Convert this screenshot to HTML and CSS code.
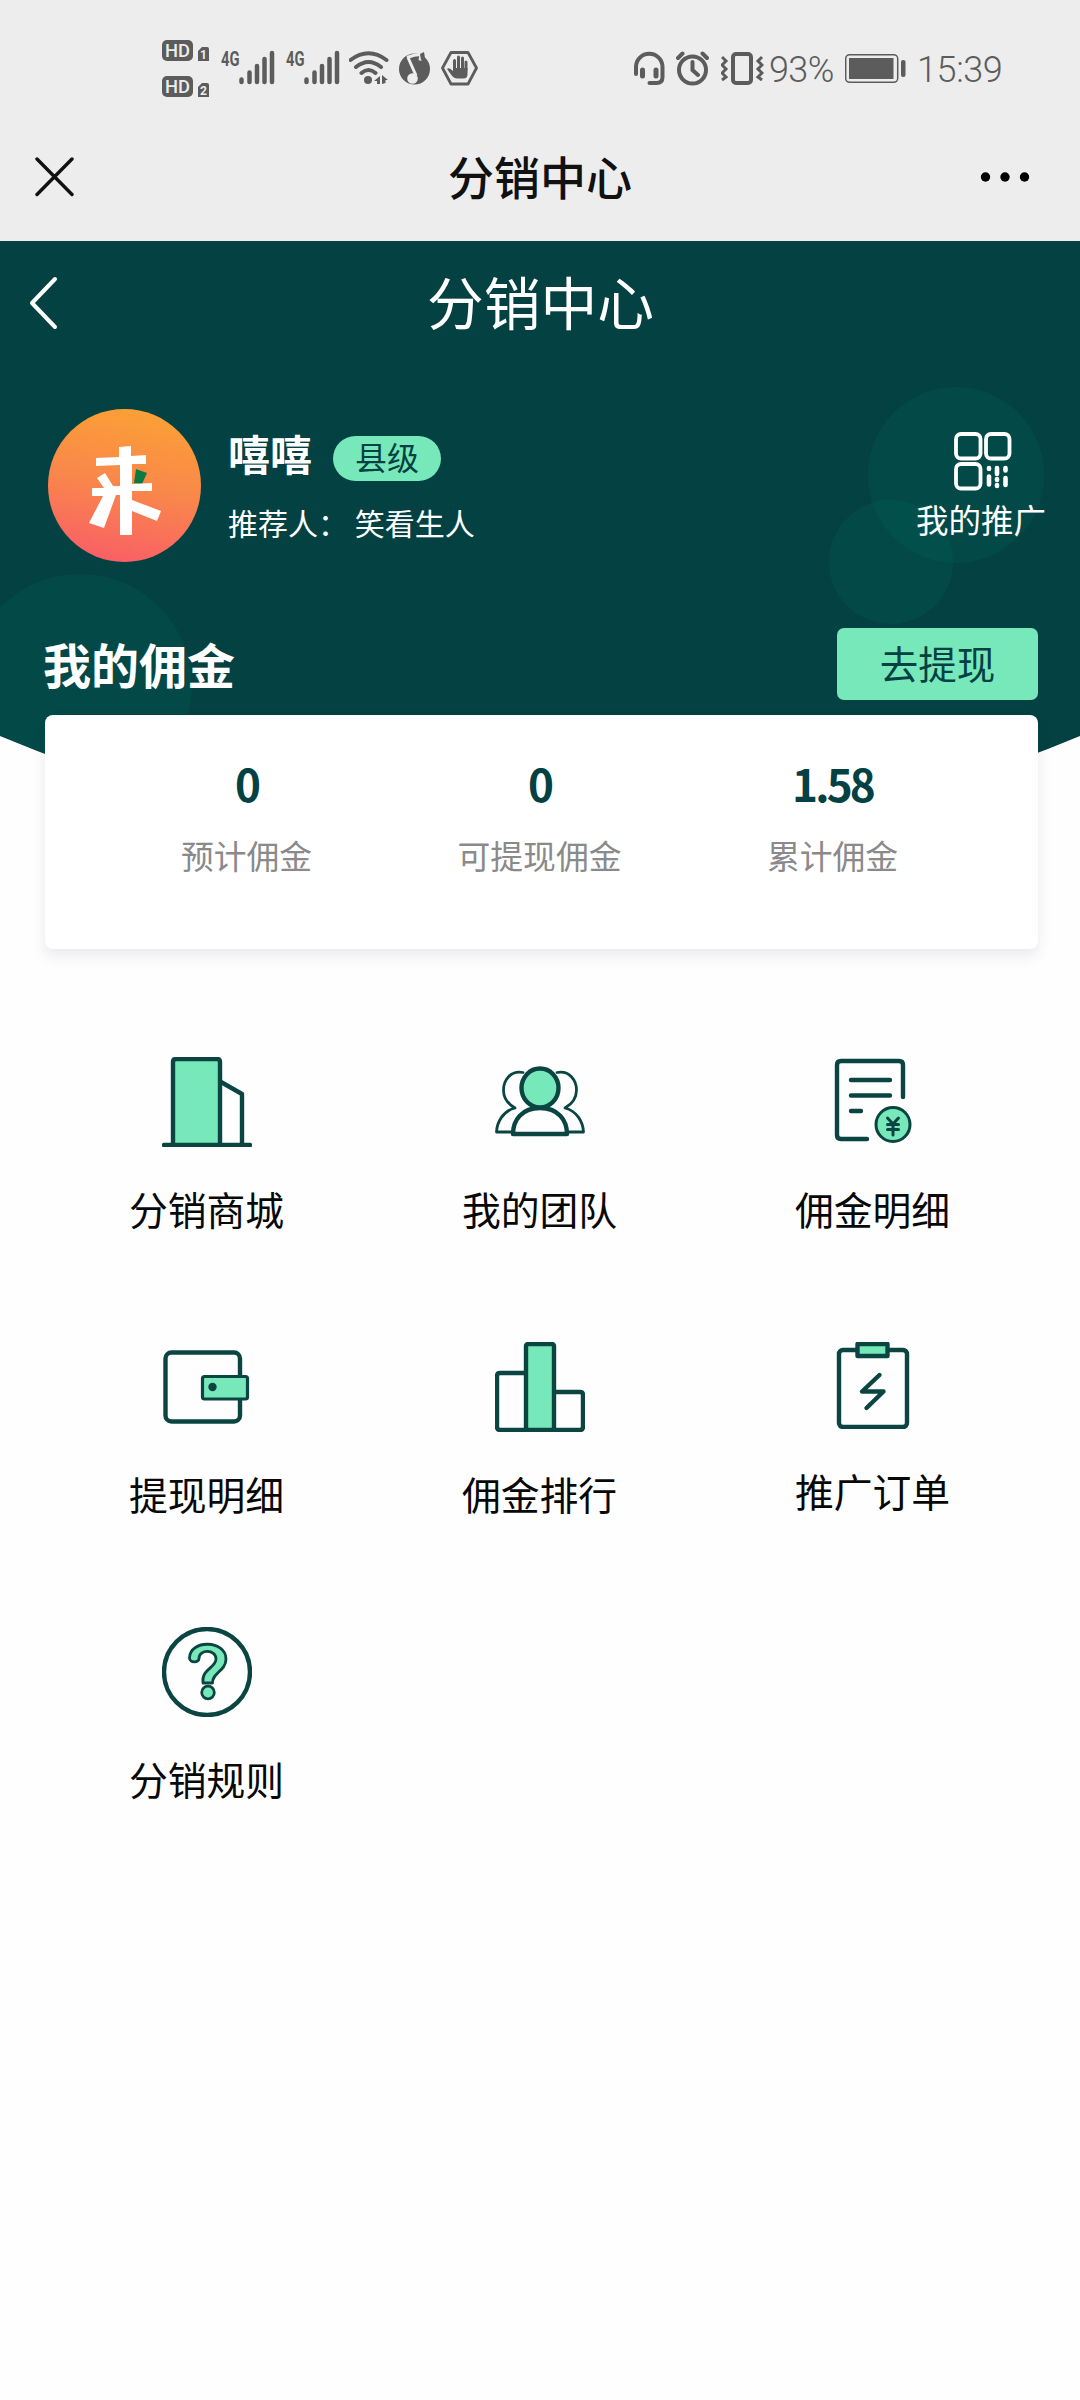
FILE: index.html
```html
<!DOCTYPE html>
<html lang="zh-CN">
<head>
<meta charset="utf-8">
<title>分销中心</title>
<link rel="stylesheet" href="styles.css">
</head>
<body>
<header class="top">
  <div class="status">
    <div class="status-left">
      <svg class="sim" width="48" height="66" viewBox="162 36 48 66">
        <rect x="162" y="40" width="31" height="21" rx="5"/><text class="hd" x="177.500" y="57" textLength="25" lengthAdjust="spacingAndGlyphs">HD</text>
        <path d="M198 51l4-4h5q2 0 2 2v12h-11z"/><text class="simno" x="203.500" y="59">1</text>
        <rect x="162" y="76" width="31" height="21" rx="5"/><text class="hd" x="177.500" y="93" textLength="25" lengthAdjust="spacingAndGlyphs">HD</text>
        <path d="M198 87l4-4h5q2 0 2 2v12h-11z"/><text class="simno" x="203.500" y="95">2</text>
      </svg>
      <svg class="signal" width="54" height="66" viewBox="221 36 54 66">
        <text class="g4" x="221" y="65.500" textLength="18.500" lengthAdjust="spacingAndGlyphs">4G</text>
        <path class="bars" d="M241.500 79.500v2.500M249.500 72.500v9.500M257 66v16M264.500 59v23M272 53v29"/>
      </svg>
      <svg class="signal" width="54" height="66" viewBox="221 36 54 66">
        <text class="g4" x="221" y="65.500" textLength="18.500" lengthAdjust="spacingAndGlyphs">4G</text>
        <path class="bars" d="M241.500 79.500v2.500M249.500 72.500v9.500M257 66v16M264.500 59v23M272 53v29"/>
      </svg>
      <svg class="wifi" width="40" height="66" viewBox="349 36 40 66">
        <path class="line" d="M350.500 60q18-13.500 36 0M356 67q12.500-10 25 0M361.500 73q7-6 14 0"/>
        <circle cx="368" cy="80" r="4"/><path d="M374 81l6-5v8h-3v-3zM382 75l6 5h-2.500v3l-3.500 1z"/>
      </svg>
      <svg class="music" width="32" height="66" viewBox="399 36 32 66">
        <circle cx="414.500" cy="69" r="15.500"/>
        <path class="note" d="M408 57.500l8 18M407 57.500q7-3 14-3l-1 6"/>
        <circle class="cut" cx="412.500" cy="78.500" r="5.300"/>
        <path d="M420 54l4-2 1 6-4 2z"/>
      </svg>
      <svg class="hand" width="38" height="66" viewBox="441 36 38 66">
        <path class="hex" d="M451 52.500h17l8.500 15.500-8.500 16h-17l-8.500-16z"/>
        <path class="finger" d="M454.500 70v-9.500M458.500 68v-11M462.500 68v-10M466 70v-8"/>
        <path d="M453 68h14.500v6q0 4.500-4 4.500h-6q-4 0-6.500-4l-4-5.500q2-2 6 2z"/>
      </svg>
    </div>
    <div class="status-right">
      <svg width="32" height="66" viewBox="633 36 32 66">
        <path class="line" d="M636 74v-7a13.200 13.200 0 0 1 26.500 0v10q0 6-6 6h-7"/>
        <path class="pad" d="M642.500 70v6M656 70v6"/>
      </svg>
      <svg class="alarm" width="34" height="66" viewBox="676 36 34 66">
        <circle class="line" cx="692.500" cy="70" r="13.500"/><path class="line" d="M692.500 62v8l5.500 5M678 58l4.500-4.500M707 58l-4.500-4.500"/>
      </svg>
      <svg class="vibrate" width="43" height="66" viewBox="721 36 43 66">
        <rect class="line" x="733" y="54" width="18" height="29" rx="3"/>
        <path class="zig" d="M722 57l4 4-4 4 4 4-4 4 4 4-4 3M762 57l-4 4 4 4-4 4 4 4-4 4 4 3"/>
      </svg>
      <span class="pct">93%</span>
      <svg class="battery" width="61" height="66" viewBox="845 36 61 66">
        <rect class="shell" x="845.700" y="54.700" width="52" height="27.600" rx="4"/>
        <rect x="849" y="58" width="44.500" height="21"/><rect x="901" y="60" width="4.500" height="17" rx="2"/>
      </svg>
      <span class="time">15:39</span>
    </div>
  </div>
  <nav class="navbar">
    <svg width="40" height="40" viewBox="0 0 40 40"><path class="close" d="M3 2l35 35.500M38 2L3 37.500"/></svg>
    <span class="nav-title">分销中心</span>
    <svg width="50" height="12" viewBox="0 0 50 12"><circle cx="5.500" cy="6" r="4.700"/><circle cx="25" cy="6" r="4.700"/><circle cx="44.500" cy="6" r="4.700"/></svg>
  </nav>
</header>

<section class="hero">
  <svg class="hero-bg" width="1080" height="540" viewBox="0 0 1080 540">
    <defs><clipPath id="curve"><path d="M0 0H1080V495Q540 720 0 495z"/></clipPath></defs>
    <g clip-path="url(#curve)">
      <path fill="#044142" d="M0 0H1080V540H0z"/>
      <circle cx="80" cy="445" r="112" fill="#00806a" opacity=".12"/>
      <circle cx="956" cy="234" r="88" fill="#008070" opacity=".14"/>
      <circle cx="891" cy="321" r="62" fill="#008070" opacity=".13"/>
    </g>
  </svg>
  <div class="page-head">
    <svg class="back" width="30" height="54" viewBox="0 0 30 54"><path d="M27 3L4 27l23 24"/></svg>
    <h1>分销中心</h1>
  </div>
  <div class="profile">
    <svg class="avatar" width="153" height="153" viewBox="0 0 153 153">
      <defs><linearGradient id="sunset" x1=".6" y1="0" x2=".4" y2="1"><stop offset="0" stop-color="#fba035"/><stop offset=".5" stop-color="#f9874b"/><stop offset="1" stop-color="#f95f66"/></linearGradient></defs>
      <circle cx="76.500" cy="76.500" r="76.500" fill="url(#sunset)"/>
      <path fill="#0b7a42" d="M88 60l11 4-5 11-8-1z"/>
      <path fill="#fff" d="M48 49l23-1V38l12-1v10l15-1v9H84v20l20-1v8H84v9l29 11-4 10-25-10v24H72V86h-4l-12 33-15-5 14-27H44v-8h12l-7-10 8-5 8 13h7V56l-24 1z"/>
    </svg>
    <div class="who">
      <div class="who-line"><strong>嘻嘻</strong><span class="level">县级</span></div>
      <p>推荐人： 笑看生人</p>
    </div>
    <a class="promo">
      <svg width="58" height="59" viewBox="0 0 58 59">
        <g class="qr"><rect x="2" y="2" width="24.500" height="24.500" rx="5"/><rect x="32" y="2" width="23.500" height="24.500" rx="5"/><rect x="2" y="32" width="24.500" height="24.500" rx="5"/></g>
        <path class="dots" d="M35 36v1M35 44.500v8M43 36v6M43 47v1M43 53v1M51.500 36v2.500M51.500 46v7"/>
      </svg>
      <span>我的推广</span>
    </a>
  </div>
  <div class="money-head"><h2>我的佣金</h2><a class="withdraw">去提现</a></div>
  <div class="card">
    <div class="stat"><b>0</b><span>预计佣金</span></div>
    <div class="stat"><b>0</b><span>可提现佣金</span></div>
    <div class="stat"><b>1.58</b><span>累计佣金</span></div>
  </div>
</section>

<main class="menu">
  <a class="item">
    <svg class="ico" width="90" height="90" viewBox="0 0 90 90"><path class="mint" d="M11 87V5q0-3 3-3h41q3 0 3 3v82"/><path d="M59 25l21 12v50"/><path d="M2 88h86"/></svg>
    <span>分销商城</span></a>
  <a class="item">
    <svg class="ico" width="90" height="90" viewBox="0 0 90 90"><g class="thin"><path d="M28 15.500C15 13 8.500 24 8.500 33c0 8 4.500 14 11.500 18C8 54 2 65 1.500 75H18"/><path d="M62 15.500C75 13 81.500 24 81.500 33c0 8-4.500 14-11.500 18 12 3 18 14 18.500 24H72"/></g><path d="M18 77c0-14 9-26 27-26s27 12 27 26z"/><ellipse class="mint" cx="45" cy="31" rx="18.500" ry="19.500"/></svg>
    <span>我的团队</span></a>
  <a class="item">
    <svg class="ico" width="90" height="90" viewBox="0 0 90 90"><path d="M39 82H13q-4 0-4-4V8q0-4 4-4h58q4 0 4 4v32M23 23h39M23 38.500h39M23 54h10"/><circle class="mint coin" cx="65" cy="67.500" r="17"/><path class="coin" d="M59.500 61l5.500 6 5.500-6M65 67v11M59.500 67.500h11M59.500 72.500h11"/></svg>
    <span>佣金明细</span></a>
  <a class="item">
    <svg class="ico" width="90" height="90" viewBox="0 0 90 90"><rect x="3.500" y="10.500" width="74.500" height="69" rx="6"/><rect class="mint wallet-tab" x="40.500" y="34.500" width="45" height="22.500" rx="2"/><circle cx="50.500" cy="45" r="4.200" class="dot"/></svg>
    <span>提现明细</span></a>
  <a class="item">
    <svg class="ico" width="90" height="90" viewBox="0 0 90 90"><path d="M30 31H5q-3 0-3 3v51q0 3 3 3h25M60 50h25q3 0 3 3v32q0 3-3 3H60"/><rect class="mint" x="31" y="2" width="28" height="86" rx="2"/></svg>
    <span>佣金排行</span></a>
  <a class="item">
    <svg class="ico" width="90" height="87" viewBox="0 0 90 87"><rect x="11" y="8" width="68" height="77" rx="4"/><rect class="mint" x="29.500" y="2" width="30" height="12"/><path d="M51.500 33L34 49.500h21.500L38.500 66"/></svg>
    <span>推广订单</span></a>
  <a class="item">
    <svg class="ico" width="90" height="90" viewBox="0 0 90 90"><circle cx="45" cy="45" r="43"/><path class="mint q" d="M41 56C39 42 54 41 54 32c0-10-17-10-17-.500 0 4.500-9.500 4.500-9.500-.500C28 12 64 13 64 32c0 12-14 14-13.500 24z"/><circle class="mint q" cx="46" cy="65.500" r="6.300"/></svg>
    <span>分销规则</span></a>
</main>
</body>
</html>
```
FILE: styles.css
```css
* { box-sizing: border-box; margin: 0; padding: 0; }
body { width: 1080px; min-height: 2400px; background: #fefefe; font-family: "Noto Sans CJK SC", sans-serif; color: #111; }
svg { display: block; flex: none; }

.top { height: 241px; background: #ededed; }
.status { height: 138px; padding: 0 71px 0 162px; display: flex; align-items: center; justify-content: space-between; color: #5c5c5c; font-family: Roboto, sans-serif; }
.status svg { fill: #5c5c5c; }
.status-left, .status-right { display: flex; align-items: center; }
.signal { margin-left: 11px; }
.wifi { margin-left: 9px; }
.music { margin-left: 10px; }
.hand { margin-left: 10px; }
.status .hd { fill: #ededed; font: 500 18.500px Roboto, sans-serif; text-anchor: middle; }
.status .simno { fill: #ededed; font: 700 12px Roboto, sans-serif; text-anchor: middle; }
.status .g4 { font: 700 21px Roboto, sans-serif; }
.status .bars { fill: none; stroke: #5c5c5c; stroke-width: 4.500; stroke-linecap: round; }
.status .line { fill: none; stroke: #5c5c5c; stroke-width: 4; stroke-linecap: round; }
.status .cut { fill: #ededed; }
.status .note { fill: none; stroke: #ededed; stroke-width: 3; }
.status .hex { fill: none; stroke: #5c5c5c; stroke-width: 2.800; stroke-linejoin: round; }
.finger { stroke: #5c5c5c; stroke-width: 3; stroke-linecap: round; }
.pad { stroke: #5c5c5c; stroke-width: 5; stroke-linecap: round; }
.zig { fill: none; stroke: #5c5c5c; stroke-width: 3; }
.status .shell { fill: none; stroke: #5c5c5c; stroke-width: 1.500; }
.alarm { margin-left: 11px; }
.vibrate { margin-left: 11px; }
.pct, .time { font-size: 36px; line-height: 66px; font-weight: 350; white-space: nowrap; padding-top: 1px; }
.pct { width: 75px; margin-left: 5px; letter-spacing: -.6px; }
.time { width: 92px; margin-left: 11px; letter-spacing: -.4px; }
.battery { margin-left: 1px; }

.navbar { height: 78px; padding: 0 50px 0 34px; display: grid; grid-template-columns: 182px 1fr 182px; align-items: center; color: #111; }
.navbar svg:last-child { justify-self: end; }
.close { stroke: #111; stroke-width: 3.400; fill: none; stroke-linecap: round; }
.nav-title { text-align: center; margin: -5px 0 0 16px; font-size: 46px; line-height: 74px; font-weight: 500; }

.hero { position: relative; height: 708px; padding-left: 45px; padding-right: 42px; color: #fff; }
.hero-bg { position: absolute; left: 0; top: 0; z-index: -1; }
.page-head { height: 124px; display: grid; grid-template-columns: 30px 1fr 30px; align-items: center; margin: 0 -17px; }
.back path { fill: none; stroke: #fff; stroke-width: 4; stroke-linecap: round; stroke-linejoin: round; }
h1 { font-size: 56.800px; font-weight: 400; line-height: 119px; height: 124px; text-align: center; margin-right: 2px; }
.profile { display: flex; align-items: flex-start; height: 197px; margin-top: 44px; padding-left: 3px; }
.who { margin-left: 27px; padding-top: 24px; }
.who-line { display: flex; align-items: center; height: 52px; }
.who-line strong { font-size: 42px; line-height: 46px; font-weight: 700; width: 105px; margin-top: -12px; }
.level { width: 108px; height: 45px; border-radius: 23px; background: #77e8ba; color: #044142; font-size: 32px; line-height: 41px; text-align: center; margin-top: -2px; }
.who p { font-size: 30px; line-height: 40px; margin-top: 17px; white-space: pre; }
.promo { margin-left: auto; margin-right: -8px; padding-top: 23px; display: flex; flex-direction: column; align-items: center; font-size: 32.500px; line-height: 40px; }
.promo svg { margin-left: 4px; }
.promo span { margin-top: 8px; }
.qr { fill: none; stroke: #fff; stroke-width: 3.800; }
.dots { stroke: #fff; stroke-width: 4.600; stroke-linecap: round; }
.money-head { display: flex; justify-content: space-between; align-items: center; height: 109px; margin-left: -2px; }
h2 { font-size: 48px; font-weight: 700; line-height: 60px; margin-top: 5px; }
.withdraw { width: 201px; height: 72px; border-radius: 7px; background: #77e8ba; color: #044142; font-size: 38.500px; line-height: 69px; text-align: center; margin-top: 6px; }
.card { height: 234px; background: #fff; border-radius: 8px; padding: 26px 59px 0 55px; display: grid; grid-template-columns: repeat(3, 293px); box-shadow: 0 7px 14px rgba(60, 50, 100, .1); }
.stat { display: flex; flex-direction: column; align-items: center; }
.stat b { color: #044142; font-size: 44px; line-height: 84px; height: 86px; font-weight: 700; letter-spacing: -2.800px; }
.stat span { color: #8a8a8a; font-size: 32.800px; line-height: 56px; }

.menu { display: grid; grid-template-columns: repeat(3, 333px); grid-auto-rows: 285px; padding: 108px 40px 0; }
.item { display: flex; flex-direction: column; align-items: center; }
.item span { font-size: 38.800px; line-height: 56px; margin-top: 33px; color: #080808; }
.ico { fill: none; stroke: #0b4542; stroke-width: 4.400; stroke-linecap: round; stroke-linejoin: round; }
.ico .mint { fill: #77e8ba; }
.thin { stroke-width: 2.800; }
.ico .coin { stroke-width: 3; }
.ico .wallet-tab { stroke-width: 3.200; }
.ico .dot { fill: #0b4542; stroke: none; }
.ico .q { stroke-width: 2.800; }
```
